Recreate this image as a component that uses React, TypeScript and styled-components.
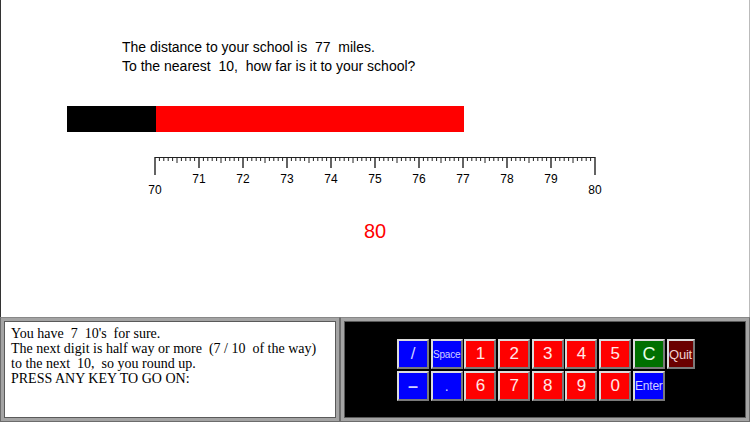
import React from "react";
import styled, { createGlobalStyle } from "styled-components";

const Global = createGlobalStyle`
  html, body { margin: 0; padding: 0; background: #ffffff; }
  body { width: 750px; height: 422px; overflow: hidden; }
  #root { width: 750px; height: 422px; }
`;

const Screen = styled.div`
  width: 750px;
  height: 422px;
  display: flex;
  flex-direction: column;
  background: #ffffff;
  font-family: "Liberation Sans", Arial, sans-serif;
`;

const Stage = styled.div`
  height: 317px;
  box-sizing: border-box;
  border-left: 1px solid #333;
  border-right: 1px solid #bbb;
  padding-top: 38px;
  display: flex;
  flex-direction: column;
`;

const Question = styled.div`
  margin-left: 121px;
  font-size: 14px;
  line-height: 19px;
  color: #000;
  white-space: pre;
`;

const Bar = styled.div`
  margin-top: 30px;
  margin-left: 66px;
  height: 26px;
  display: flex;
`;

const BarPart = styled.div<{ $color: string }>`
  height: 100%;
  background: ${(p) => p.$color};
`;

const RulerSvg = styled.svg`
  display: block;
  margin-top: 18px;
  margin-left: 139px;
`;

const Answer = styled.div`
  margin-top: 19px;
  text-align: center;
  color: #ff0000;
  font-size: 20px;
  line-height: 24px;
`;

const Bottom = styled.div`
  flex: 1;
  display: flex;
`;

const Frame = styled.div<{ $w: number }>`
  width: ${(p) => p.$w}px;
  box-sizing: border-box;
  background: #a4a4a4;
  border: 1px solid #6c6c6c;
  border-top-color: #888;
  padding: 3px;
  display: flex;
`;

const TextBox = styled.div`
  flex: 1;
  background: #ffffff;
  border: 1px solid #5a5a5a;
  padding: 4px 0 0 6px;
  font-family: "Liberation Serif", "Times New Roman", serif;
  font-size: 14px;
  line-height: 15px;
  color: #000;
  white-space: pre;
`;

const KeyBox = styled.div`
  flex: 1;
  background: #000000;
  border: 1px solid #5a5a5a;
  padding: 17px 0 0 52px;
`;

const Keys = styled.div`
  display: grid;
  grid-template-columns: repeat(8, 32px) 28px;
  grid-auto-rows: 30px;
  column-gap: 1.7px;
  row-gap: 2px;
`;

const tones: Record<string, { bg: string; fg: string }> = {
  blue: { bg: "#0000ff", fg: "#d0d0ff" },
  red: { bg: "#ff0000", fg: "#ffe8e8" },
  green: { bg: "#007000", fg: "#e8ffe8" },
  maroon: { bg: "#6a0000", fg: "#f0d0d0" },
};

const Key = styled.div<{ $tone: string; $size: number; $bold?: boolean }>`
  box-sizing: border-box;
  background: ${(p) => tones[p.$tone].bg};
  color: ${(p) => tones[p.$tone].fg};
  border: 2px solid;
  border-color: #dcdcdc #7a7a7a #7a7a7a #dcdcdc;
  display: flex;
  align-items: center;
  justify-content: center;
  font-size: ${(p) => p.$size}px;
  font-weight: ${(p) => (p.$bold ? 700 : 400)};
  overflow: hidden;
  white-space: nowrap;
  letter-spacing: -0.2px;
`;

const Spacer = styled.div``;

type K = { label: string; tone: string; size: number; bold?: boolean } | null;

const row1: K[] = [
  { label: "/", tone: "blue", size: 17 },
  { label: "Space", tone: "blue", size: 10 },
  { label: "1", tone: "red", size: 17 },
  { label: "2", tone: "red", size: 17 },
  { label: "3", tone: "red", size: 17 },
  { label: "4", tone: "red", size: 17 },
  { label: "5", tone: "red", size: 17 },
  { label: "C", tone: "green", size: 18 },
  { label: "Quit", tone: "maroon", size: 13 },
];
const row2: K[] = [
  { label: "–", tone: "blue", size: 18, bold: true },
  { label: ".", tone: "blue", size: 14 },
  { label: "6", tone: "red", size: 17 },
  { label: "7", tone: "red", size: 17 },
  { label: "8", tone: "red", size: 17 },
  { label: "9", tone: "red", size: 17 },
  { label: "0", tone: "red", size: 17 },
  { label: "Enter", tone: "blue", size: 12 },
  null,
];

function Ruler() {
  const x0 = 15;
  const unit = 44;
  const ticks = [];
  for (let i = 0; i <= 100; i++) {
    const x = x0 + i * (unit / 10);
    let y2 = 11;
    if (i === 0 || i === 100) y2 = 25;
    else if (i % 10 === 0) y2 = 18;
    else if (i % 5 === 0) y2 = 13;
    ticks.push(<line key={i} x1={x} x2={x} y1={7} y2={y2} stroke="#222" strokeWidth={i % 10 === 0 ? 1.4 : 1} />);
  }
  const labels = [];
  for (let k = 0; k <= 10; k++) {
    const x = x0 + k * unit;
    const y = k === 0 || k === 10 ? 44 : 33;
    labels.push(
      <text key={k} x={x} y={y} textAnchor="middle" fontSize={12} fontFamily="Liberation Sans, Arial, sans-serif" fill="#000">
        {70 + k}
      </text>
    );
  }
  return (
    <RulerSvg width={470} height={50} viewBox="0 0 470 50">
      <line x1={x0} x2={x0 + 10 * unit} y1={7.5} y2={7.5} stroke="#222" strokeWidth={1.2} />
      {ticks}
      {labels}
    </RulerSvg>
  );
}

export default function App() {
  const unitPx = 44;
  const value = 77;
  return (
    <Screen>
      <Global />
      <Stage>
        <Question>
          {"The distance to your school is  77  miles.\nTo the nearest  10,  how far is it to your school?"}
        </Question>
        <Bar>
          <BarPart $color="#000000" style={{ width: 89 }} />
          <BarPart $color="#ff0000" style={{ width: (value - 70) * unitPx }} />
        </Bar>
        <Ruler />
        <Answer>80</Answer>
      </Stage>
      <Bottom>
        <Frame $w={340}>
          <TextBox>
            {"You have  7  10's  for sure.\nThe next digit is half way or more  (7 / 10  of the way)\nto the next  10,  so you round up.\nPRESS ANY KEY TO GO ON:"}
          </TextBox>
        </Frame>
        <Frame $w={410}>
          <KeyBox>
            <Keys>
              {[...row1, ...row2].map((k, i) =>
                k ? (
                  <Key key={i} $tone={k.tone} $size={k.size} $bold={k.bold}>
                    {k.label}
                  </Key>
                ) : (
                  <Spacer key={i} />
                )
              )}
            </Keys>
          </KeyBox>
        </Frame>
      </Bottom>
    </Screen>
  );
}
